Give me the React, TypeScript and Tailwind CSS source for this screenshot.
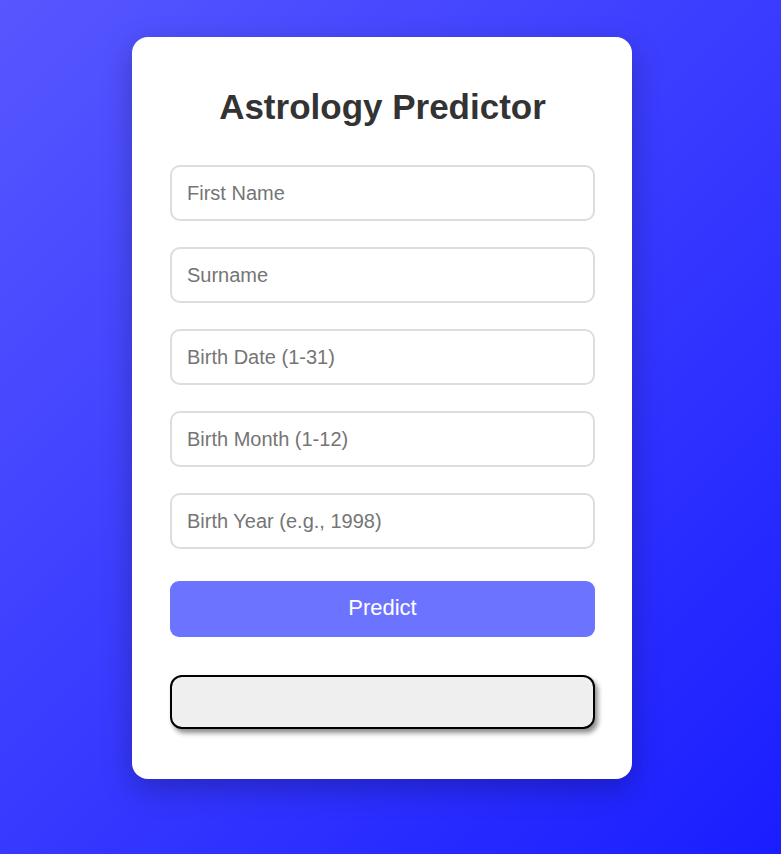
import React from "react";

const fields = [
  "First Name",
  "Surname",
  "Birth Date (1-31)",
  "Birth Month (1-12)",
  "Birth Year (e.g., 1998)",
];

const App = () => {
  return (
    <div className="min-h-screen w-full bg-[linear-gradient(135deg,#5757ff,#1a1eff)] flex justify-center pr-[17px] pt-[37px] pb-[75px] font-['Liberation_Sans',Arial,sans-serif]">
      <div className="w-[500px] bg-white rounded-[16px] shadow-[0_10px_30px_rgba(0,0,0,0.25)] pl-[38px] pr-[37px] pt-[50px] pb-[50px] flex flex-col">
        <h1 className="text-[35px] leading-[40px] font-bold text-[#333] text-center">
          Astrology Predictor
        </h1>
        <div className="flex flex-col gap-[26px] mt-[38px]">
          {fields.map((f) => (
            <input
              key={f}
              type="text"
              placeholder={f}
              className="h-[56px] w-full border-2 border-[#dddddd] rounded-[10px] px-[15px] text-[20px] text-[#333] placeholder:text-[#757575] outline-none"
            />
          ))}
        </div>
        <button className="mt-[32px] h-[56px] w-full rounded-[9px] bg-[#6c74ff] text-white text-[22px] pb-[4px]">
          Predict
        </button>
        <div className="mt-[38px] h-[54px] w-full rounded-[12px] border-2 border-black bg-[#efefef] shadow-[3px_4px_5px_rgba(0,0,0,0.45)]" />
      </div>
    </div>
  );
};

export default App;
